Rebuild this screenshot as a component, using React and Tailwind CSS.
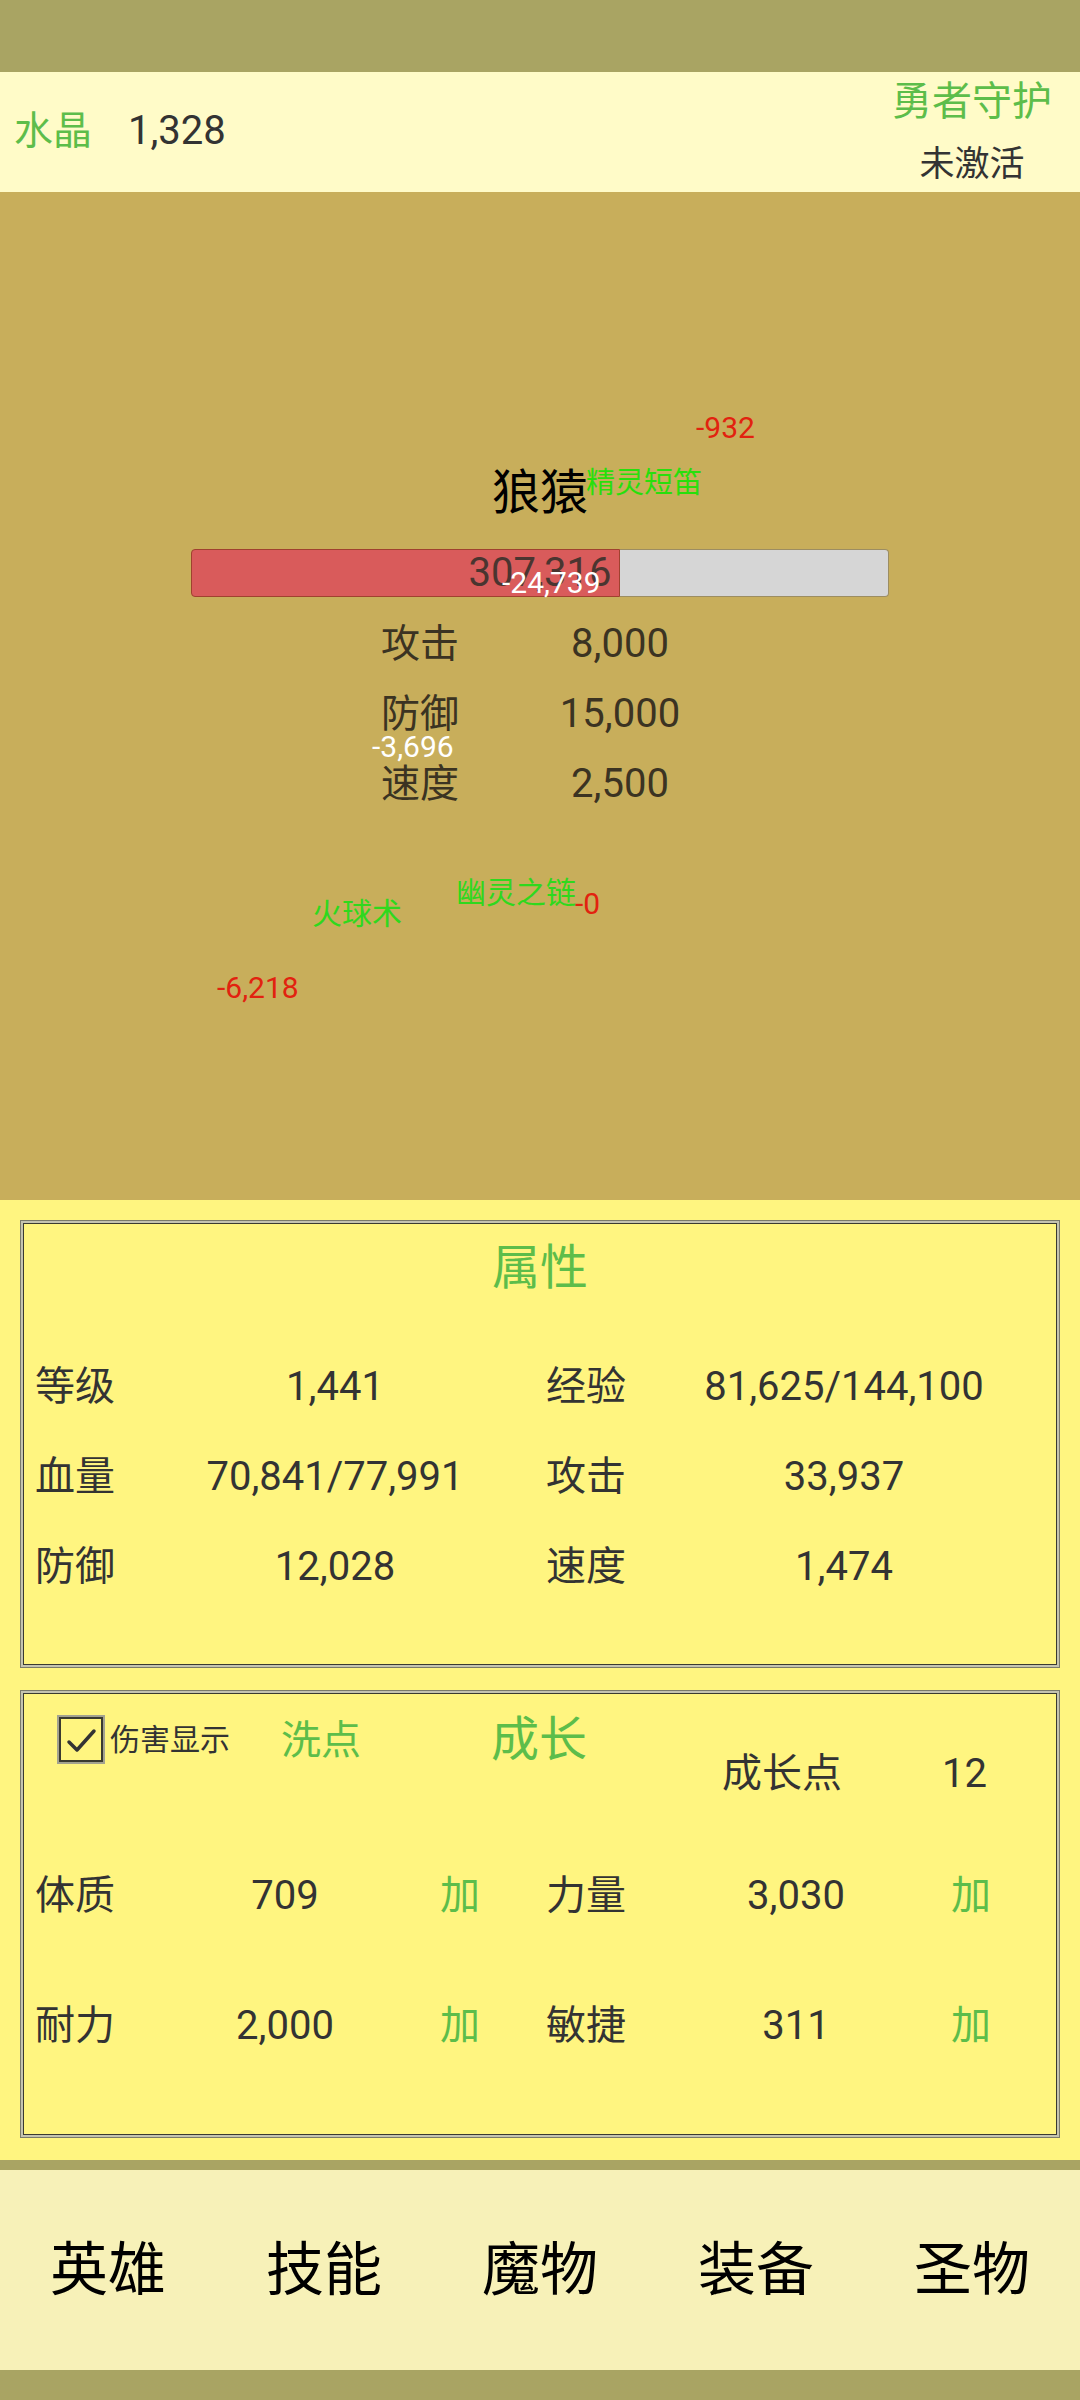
import React from 'react';

const monsterStats = [
    { label: '攻击', value: '8,000' },
    { label: '防御', value: '15,000' },
    { label: '速度', value: '2,500' },
];

const attrs = [
    ['等级', '1,441', '经验', '81,625/144,100'],
    ['血量', '70,841/77,991', '攻击', '33,937'],
    ['防御', '12,028', '速度', '1,474'],
];

const growth = [
    ['体质', '709', '力量', '3,030'],
    ['耐力', '2,000', '敏捷', '311'],
];

const tabs = ['英雄', '技能', '魔物', '装备', '圣物'];

// 浮动伤害数字 (覆盖在战斗区上)
const floaters = [
    { text: '-932', x: 696, y: 221, cls: 'text-[30px] text-[#e2220f]' },
    { text: '精灵短笛', x: 586, y: 277, cls: 'text-[29px] text-[#27df0b]' },
    { text: '-24,739', x: 502, y: 376, cls: 'text-[30px] text-white' },
    { text: '-3,696', x: 372, y: 540, cls: 'text-[30px] text-white' },
    { text: '幽灵之链', x: 456, y: 686, cls: 'text-[30px] text-[#2fd81d]' },
    { text: '-0', x: 575, y: 697, cls: 'text-[30px] text-[#e2220f]' },
    { text: '火球术', x: 312, y: 707, cls: 'text-[30px] text-[#2fd81d]' },
    { text: '-6,218', x: 217, y: 781, cls: 'text-[30px] text-[#e2220f]' },
];

function Panel({ children }) {
    return (
        <div className="h-[448px] border border-[#7a7a6a] bg-[#c4c3b0] p-[2px]">
            <div className="h-full border border-[#3a3a30] bg-[#fff580]">{children}</div>
        </div>
    );
}

export default function App() {
    const hp = 307316;
    const hpMax = 500000;
    const hpPct = (hp / hpMax) * 100;

    return (
        <div className="w-[1080px] h-[2400px] flex flex-col font-['Roboto','Noto_Sans_CJK_SC',sans-serif] text-[#333]">
            {/* barre du haut */}
            <div className="h-[72px] bg-[#a9a463]" />

            {/* en-tête */}
            <header className="h-[120px] bg-[#fffbc8] flex items-start justify-between">
                <div className="flex items-center h-full pl-[14px] pb-[2px]">
                    <span className="text-[39px] leading-none text-[#5dbd4a]">水晶</span>
                    <span className="ml-[36px] text-[40px] leading-none">1,328</span>
                </div>
                <div className="flex flex-col items-center pr-[28px] pt-[6px]">
                    <span className="text-[40px] leading-[48px] text-[#5dbd4a]">勇者守护</span>
                    <span className="mt-[18px] text-[35px] leading-[42px]">未激活</span>
                </div>
            </header>

            {/* zone de combat */}
            <section className="relative h-[1008px] bg-[#c8ae5b] flex flex-col items-center pt-[272px]">
                <h2 className="text-[48px] leading-[58px] text-black">狼猿</h2>
                <div className="relative mt-[27px] flex w-[698px] h-[48px]">
                    <div
                        className="h-full bg-[#d95b5b] border border-[#a0412f] rounded-l-[4px]"
                        style={{ width: `${hpPct}%` }}
                    />
                    <div className="flex-1 h-full bg-[#d6d6d6] border border-l-0 border-[#9c8d62] rounded-r-[4px]" />
                    <span className="absolute inset-0 flex items-center justify-center text-[40px] leading-none text-[#4a3530]">
                        307,316
                    </span>
                </div>
                <div className="mt-[12px] w-full flex flex-col pl-[381px]">
                    {monsterStats.map((s) => (
                        <div key={s.label} className="flex h-[70px] items-center text-[#3b3322]">
                            <span className="w-[139px] text-[39px] leading-none">{s.label}</span>
                            <span className="w-[200px] text-center text-[40px] leading-none">{s.value}</span>
                        </div>
                    ))}
                </div>

                {floaters.map((f) => (
                    <span
                        key={f.text}
                        className={`absolute leading-none whitespace-nowrap ${f.cls}`}
                        style={{ left: f.x, top: f.y }}
                    >
                        {f.text}
                    </span>
                ))}
            </section>

            {/* panneaux */}
            <section className="h-[960px] bg-[#fff580] px-[20px] pt-[20px] flex flex-col gap-[22px]">
                <Panel>
                    <div className="pt-[14px] text-center text-[48px] leading-[60px] text-[#5dbd4a]">属性</div>
                    <div className="mt-[44px] pl-[11px] grid grid-cols-[80px_431px_80px_1fr] text-[40px] leading-none">
                        {attrs.map((r) => (
                            <React.Fragment key={r[0]}>
                                <div className="h-[90px] flex items-center">{r[0]}</div>
                                <div className="h-[90px] flex items-center justify-center pl-[9px]">{r[1]}</div>
                                <div className="h-[90px] flex items-center">{r[2]}</div>
                                <div className="h-[90px] flex items-center justify-center pl-[6px]">{r[3]}</div>
                            </React.Fragment>
                        ))}
                    </div>
                </Panel>

                <Panel>
                    <div className="h-[137px] flex items-start pl-[33px]">
                        <div className="mt-[21px] w-[48px] h-[49px] border-2 border-[#a3a290] bg-[#fff580]">
                            <div className="w-full h-full border-2 border-[#3a3a30] flex items-center justify-center">
                                <svg width="38" height="38" viewBox="0 0 38 38" fill="none">
                                    <path d="M7 21 L15 29 L32 10" stroke="#333" strokeWidth="3.5" strokeLinecap="round" strokeLinejoin="round" />
                                </svg>
                            </div>
                        </div>
                        <span className="ml-[5px] mt-[28px] text-[30px] leading-[36px]">伤害显示</span>
                        <span className="ml-[51px] mt-[23px] text-[40px] leading-[48px] text-[#5dbd4a]">洗点</span>
                        <span className="ml-[130px] mt-[17px] text-[48px] leading-[58px] text-[#5dbd4a]">成长</span>
                        <span className="ml-[135px] mt-[56px] text-[40px] leading-[48px]">成长点</span>
                        <span className="ml-[100px] mt-[56px] text-[40px] leading-[48px]">12</span>
                    </div>
                    <div className="pl-[11px] grid grid-cols-[80px_325px_106px_80px_325px_1fr] text-[40px] leading-none">
                        {growth.map((r) => (
                            <React.Fragment key={r[0]}>
                                <div className="h-[130px] flex items-center">{r[0]}</div>
                                <div className="h-[130px] flex items-center justify-center pl-[15px]">{r[1]}</div>
                                <div className="h-[130px] flex items-center text-[#5dbd4a]">加</div>
                                <div className="h-[130px] flex items-center">{r[2]}</div>
                                <div className="h-[130px] flex items-center justify-center pl-[15px]">{r[3]}</div>
                                <div className="h-[130px] flex items-center text-[#5dbd4a]">加</div>
                            </React.Fragment>
                        ))}
                    </div>
                </Panel>
            </section>

            {/* navigation */}
            <div className="h-[10px] bg-[#a9a463]" />
            <nav className="h-[200px] bg-[#f7f1b8] grid grid-cols-5">
                {tabs.map((t) => (
                    <div key={t} className="flex items-center justify-center text-[58px] leading-none text-black">
                        {t}
                    </div>
                ))}
            </nav>
            <div className="flex-1 bg-[#a9a463]" />
        </div>
    );
}
